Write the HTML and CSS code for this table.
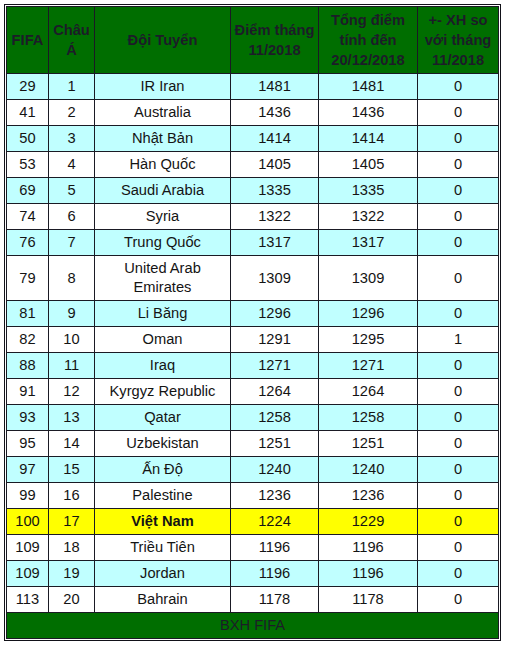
FILE: index.html
```html
<!DOCTYPE html>
<html lang="vi">
<head>
<meta charset="utf-8">
<title>BXH FIFA</title>
<link rel="stylesheet" href="styles.css">
</head>
<body>
<div class="frame">
<table class="rank">
<thead>
<tr>
<th class="c1">FIFA</th>
<th class="c2">Châu<br>Á</th>
<th class="c3">Đội Tuyển</th>
<th class="c4">Điểm tháng<br>11/2018</th>
<th class="c5">Tổng điểm<br>tính đến<br>20/12/2018</th>
<th class="c6">+- XH so<br>với tháng<br>11/2018</th>
</tr>
</thead>
<tbody>
<tr class="alt"><td>29</td><td>1</td><td>IR Iran</td><td>1481</td><td>1481</td><td>0</td></tr>
<tr><td>41</td><td>2</td><td>Australia</td><td>1436</td><td>1436</td><td>0</td></tr>
<tr class="alt"><td>50</td><td>3</td><td>Nhật Bản</td><td>1414</td><td>1414</td><td>0</td></tr>
<tr><td>53</td><td>4</td><td>Hàn Quốc</td><td>1405</td><td>1405</td><td>0</td></tr>
<tr class="alt"><td>69</td><td>5</td><td>Saudi Arabia</td><td>1335</td><td>1335</td><td>0</td></tr>
<tr><td>74</td><td>6</td><td>Syria</td><td>1322</td><td>1322</td><td>0</td></tr>
<tr class="alt"><td>76</td><td>7</td><td>Trung Quốc</td><td>1317</td><td>1317</td><td>0</td></tr>
<tr><td>79</td><td>8</td><td>United Arab<br>Emirates</td><td>1309</td><td>1309</td><td>0</td></tr>
<tr class="alt"><td>81</td><td>9</td><td>Li Băng</td><td>1296</td><td>1296</td><td>0</td></tr>
<tr><td>82</td><td>10</td><td>Oman</td><td>1291</td><td>1295</td><td>1</td></tr>
<tr class="alt"><td>88</td><td>11</td><td>Iraq</td><td>1271</td><td>1271</td><td>0</td></tr>
<tr><td>91</td><td>12</td><td>Kyrgyz Republic</td><td>1264</td><td>1264</td><td>0</td></tr>
<tr class="alt"><td>93</td><td>13</td><td>Qatar</td><td>1258</td><td>1258</td><td>0</td></tr>
<tr><td>95</td><td>14</td><td>Uzbekistan</td><td>1251</td><td>1251</td><td>0</td></tr>
<tr class="alt"><td>97</td><td>15</td><td>Ấn Độ</td><td>1240</td><td>1240</td><td>0</td></tr>
<tr><td>99</td><td>16</td><td>Palestine</td><td>1236</td><td>1236</td><td>0</td></tr>
<tr class="hl"><td>100</td><td>17</td><td class="bold">Việt Nam</td><td>1224</td><td>1229</td><td>0</td></tr>
<tr><td>109</td><td>18</td><td>Triều Tiên</td><td>1196</td><td>1196</td><td>0</td></tr>
<tr class="alt"><td>109</td><td>19</td><td>Jordan</td><td>1196</td><td>1196</td><td>0</td></tr>
<tr><td>113</td><td>20</td><td>Bahrain</td><td>1178</td><td>1178</td><td>0</td></tr>
</tbody>
<tfoot>
<tr><td colspan="6">BXH FIFA</td></tr>
</tfoot>
</table>
</div>
</body>
</html>
```

FILE: styles.css
```css
html, body {
  margin: 0;
  padding: 0;
  background: #ffffff;
}

body {
  font-family: "Liberation Sans", Arial, sans-serif;
  font-size: 14.67px;
  color: #141414;
}

.frame {
  margin: 4px 0 0 4px;
  border: 1px solid #111118;
  padding: 1px;
  width: fit-content;
}

.rank {
  border-collapse: separate;
  border-spacing: 0;
  table-layout: fixed;
  width: 493px;
  border-top: 1px solid #1a1a24;
  border-left: 1px solid #1a1a24;
}

.rank th,
.rank td {
  box-sizing: border-box;
  border-right: 1px solid #1a1a24;
  border-bottom: 1px solid #1a1a24;
  text-align: center;
  vertical-align: middle;
  padding: 3px 0;
}

.rank th {
  background: #006e00;
  color: #1c1c28;
  font-weight: bold;
  line-height: 20px;
}

.rank td {
  line-height: 19px;
}

.c1 { width: 42px; }
.c2 { width: 46px; }
.c3 { width: 136px; }
.c4 { width: 88px; }
.c5 { width: 99px; }
.c6 { width: 81px; }

.rank tr.alt td {
  background: #c0ffff;
}

.rank tr.hl td {
  background: #ffff00;
}

.rank td.bold {
  font-weight: bold;
}

.rank tfoot td {
  background: #006e00;
  color: #1c1c28;
}
```
